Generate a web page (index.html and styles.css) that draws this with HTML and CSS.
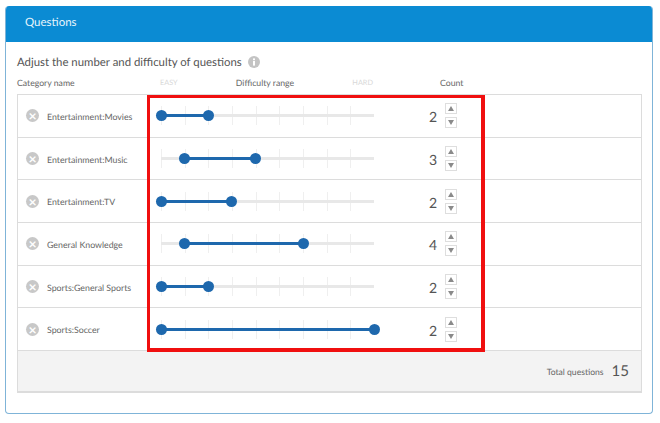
FILE: index.html
```html
<!DOCTYPE html>
<html lang="en">
<head>
    <meta charset="UTF-8">
    <meta name="viewport" content="width=device-width, initial-scale=1.0">
    <title>Questions</title>
    <link rel="stylesheet" href="styles.css">
</head>
<body>
    <div class="panel">
        <div class="panel-head">Questions</div>
        <div class="panel-body">
            <h2 class="title">Adjust the number and difficulty of questions
                <svg class="info" width="12" height="12" viewBox="0 0 12 12"><circle cx="6" cy="6" r="6" fill="#c4c4c4"/><rect x="5" y="5" width="2" height="4.6" fill="#fff"/><rect x="5" y="2.4" width="2" height="1.8" fill="#fff"/></svg>
            </h2>
            <div class="cols">
                <div class="col-name">Category name</div>
                <div class="col-range">
                    <span class="level">EASY</span>
                    <span>Difficulty range</span>
                    <span class="level">HARD</span>
                </div>
                <div class="col-count">Count</div>
            </div>
            <div class="table">
                <div class="row">
                    <div class="name"><span class="remove">&times;</span>Entertainment:Movies</div>
                    <div class="slider"><div class="track"></div><div class="fill" style="left:0%;width:22.2%"></div><span class="thumb" style="left:0%"></span><span class="thumb" style="left:22.2%"></span></div>
                    <div class="count">2</div>
                    <div class="spin"><span class="up"></span><span class="down"></span></div>
                </div>
                <div class="row">
                    <div class="name"><span class="remove">&times;</span>Entertainment:Music</div>
                    <div class="slider"><div class="track"></div><div class="fill" style="left:11.1%;width:33.3%"></div><span class="thumb" style="left:11.1%"></span><span class="thumb" style="left:44.4%"></span></div>
                    <div class="count">3</div>
                    <div class="spin"><span class="up"></span><span class="down"></span></div>
                </div>
                <div class="row">
                    <div class="name"><span class="remove">&times;</span>Entertainment:TV</div>
                    <div class="slider"><div class="track"></div><div class="fill" style="left:0%;width:33.3%"></div><span class="thumb" style="left:0%"></span><span class="thumb" style="left:33.3%"></span></div>
                    <div class="count">2</div>
                    <div class="spin"><span class="up"></span><span class="down"></span></div>
                </div>
                <div class="row">
                    <div class="name"><span class="remove">&times;</span>General Knowledge</div>
                    <div class="slider"><div class="track"></div><div class="fill" style="left:11.1%;width:55.6%"></div><span class="thumb" style="left:11.1%"></span><span class="thumb" style="left:66.7%"></span></div>
                    <div class="count">4</div>
                    <div class="spin"><span class="up"></span><span class="down"></span></div>
                </div>
                <div class="row">
                    <div class="name"><span class="remove">&times;</span>Sports:General Sports</div>
                    <div class="slider"><div class="track"></div><div class="fill" style="left:0%;width:22.2%"></div><span class="thumb" style="left:0%"></span><span class="thumb" style="left:22.2%"></span></div>
                    <div class="count">2</div>
                    <div class="spin"><span class="up"></span><span class="down"></span></div>
                </div>
                <div class="row">
                    <div class="name"><span class="remove">&times;</span>Sports:Soccer</div>
                    <div class="slider"><div class="track"></div><div class="fill" style="left:0%;width:100%"></div><span class="thumb" style="left:0%"></span><span class="thumb" style="left:100%"></span></div>
                    <div class="count">2</div>
                    <div class="spin"><span class="up"></span><span class="down"></span></div>
                </div>
                <div class="total">
                    <span class="total-label">Total questions</span>
                    <span class="total-num">15</span>
                </div>
            </div>
        </div>
    </div>
    <div class="highlight"></div>
</body>
</html>
```

FILE: styles.css
```css
html, body {
    height: 100%;
}
body {
    margin: 0;
    padding: 6px 7px 0 5px;
    box-sizing: border-box;
    background: #fff;
    font-family: Lato, "Open Sans", sans-serif;
    color: #555;
    overflow: hidden;
    text-rendering: geometricPrecision;
}
.panel {
    height: 408px;
    box-sizing: border-box;
    border: 1px solid #7fb4d8;
    border-top: 0;
    border-radius: 4px;
    overflow: hidden;
}
.panel-head {
    height: 36px;
    margin: 0 -1px;
    padding-left: 20px;
    background: #0b8bd3;
    color: #e8f5fc;
    font-size: 11.5px;
    line-height: 33px;
}
.panel-body {
    padding: 0 10px 0 11px;
}
.title {
    margin: 0;
    padding-top: 11px;
    height: 22px;
    font-size: 11.4px;
    line-height: 19px;
    font-weight: 400;
    color: #555;
}
.info {
    margin-left: 3px;
    vertical-align: -2px;
}
.cols {
    display: flex;
    height: 19px;
    font-size: 8.7px;
    line-height: 16px;
    color: #666;
}
.col-name {
    width: 143px;
}
.col-range {
    width: 213px;
    display: flex;
    justify-content: space-between;
}
.level {
    font-size: 7.3px;
    color: #d8d8d8;
}
.col-count {
    margin-left: 67px;
}
.table {
    border: 1px solid #dcdcdc;
    border-bottom-width: 2px;
}
.row {
    display: flex;
    align-items: center;
    height: 41.7px;
    border-bottom: 1px solid #dcdcdc;
}
.name {
    width: 143px;
    display: flex;
    align-items: center;
    padding: 1px 0 0 8px;
    box-sizing: border-box;
    font-size: 8.8px;
    color: #666;
}
.remove {
    width: 13px;
    height: 13px;
    margin: -1px 8px 0 0;
    border-radius: 50%;
    background: #c8c8c8;
    color: #fff;
    font-size: 14px;
    font-weight: 700;
    line-height: 13px;
    text-align: center;
}
.slider {
    position: relative;
    width: 213px;
    height: 19px;
    background: repeating-linear-gradient(to right, #efefef 0, #efefef 1px, transparent 1px, transparent 23.67px);
}
.track {
    position: absolute;
    left: 0;
    right: 0;
    top: 8px;
    height: 3px;
    background: #e8e8e8;
}
.fill {
    position: absolute;
    top: 8px;
    height: 3px;
    background: #1e68ad;
}
.thumb {
    position: absolute;
    top: 4px;
    width: 11px;
    height: 11px;
    margin-left: -5.5px;
    border-radius: 50%;
    background: #1e68ad;
}
.count {
    width: 63px;
    padding-top: 2px;
    text-align: right;
    font-size: 14px;
    color: #555;
}
.spin {
    display: flex;
    flex-direction: column;
    gap: 3px;
    margin-left: 8px;
}
.up, .down {
    position: relative;
    display: block;
    width: 10px;
    height: 9px;
    border: 1px solid #dedede;
}
.up::after, .down::after {
    content: "";
    position: absolute;
    left: 2px;
    top: 2px;
    border-left: 3px solid transparent;
    border-right: 3px solid transparent;
}
.up::after {
    border-bottom: 5px solid #8a8a8a;
}
.down::after {
    border-top: 5px solid #8a8a8a;
}
.total {
    height: 40px;
    display: flex;
    align-items: center;
    justify-content: flex-end;
    padding-right: 12px;
    background: #f3f3f3;
}
.total-label {
    font-size: 8.6px;
    color: #666;
    margin-top: 2px;
}
.total-num {
    margin-left: 8px;
    font-size: 15px;
    color: #555;
}
/* red annotation drawn over the table */
.highlight {
    position: absolute;
    left: 147px;
    top: 95px;
    width: 331px;
    height: 250px;
    border: 4px solid #f00f0f;
    border-width: 3px 4px 4px 3px;
}
```
